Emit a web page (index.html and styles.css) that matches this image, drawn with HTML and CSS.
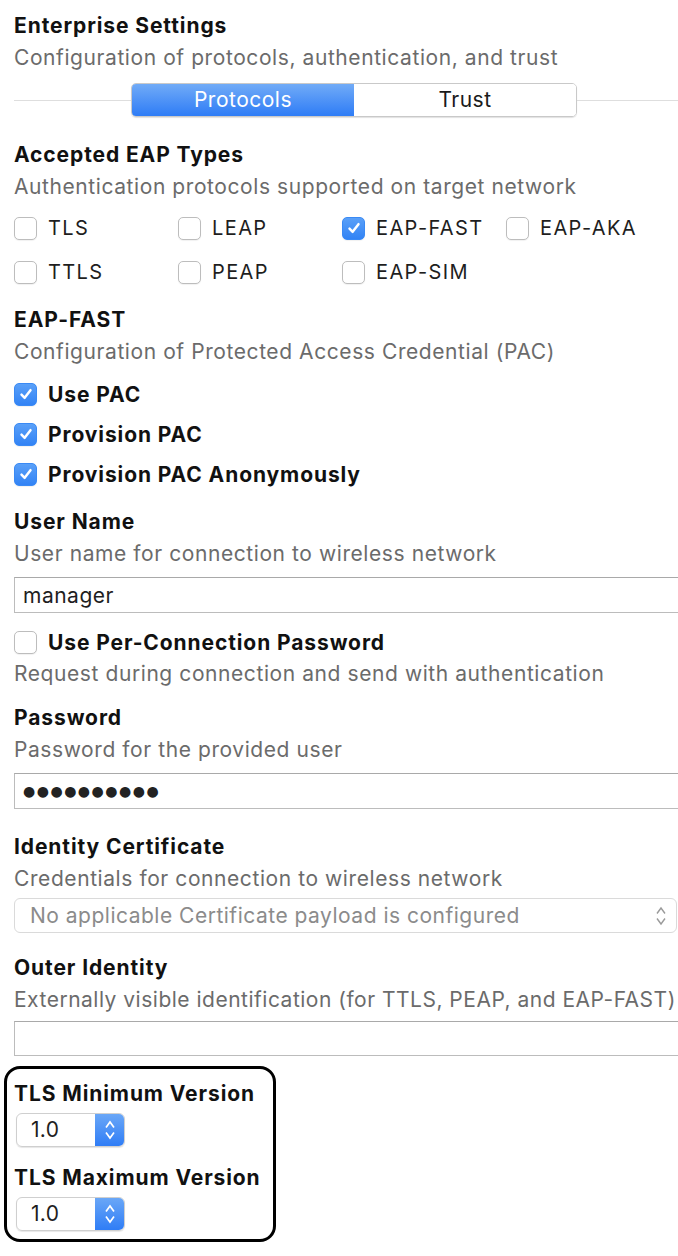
FILE: index.html
```html
<!DOCTYPE html>
<html lang="en">
<head>
  <meta charset="UTF-8" />
  <meta name="viewport" content="width=device-width, initial-scale=1" />
  <title>Enterprise Settings</title>
  <link rel="stylesheet" href="styles.css">
</head>
<body>
  <div class="page">

    <div class="section">
      <div class="title">Enterprise Settings</div>
      <div class="sub">Configuration of protocols, authentication, and trust</div>
      <div class="tabs-row">
        <div class="rule"></div>
        <div class="segmented">
          <span class="seg active">Protocols</span>
          <span class="seg">Trust</span>
        </div>
        <div class="rule"></div>
      </div>
    </div>

    <div class="section eap-types">
      <div class="title">Accepted EAP Types</div>
      <div class="sub">Authentication protocols supported on target network</div>
      <div class="check-grid">
        <label class="check"><span class="box"></span>TLS</label>
        <label class="check"><span class="box"></span>LEAP</label>
        <label class="check"><span class="box checked"><svg viewBox="0 0 16 16"><path d="M4 8.6 L6.8 11.4 L12 4.6" /></svg></span>EAP-FAST</label>
        <label class="check"><span class="box"></span>EAP-AKA</label>
        <label class="check"><span class="box"></span>TTLS</label>
        <label class="check"><span class="box"></span>PEAP</label>
        <label class="check"><span class="box"></span>EAP-SIM</label>
      </div>
    </div>

    <div class="section eap-fast">
      <div class="title">EAP-FAST</div>
      <div class="sub">Configuration of Protected Access Credential (PAC)</div>
      <div class="check-list">
        <label class="check bold"><span class="box checked"><svg viewBox="0 0 16 16"><path d="M4 8.6 L6.8 11.4 L12 4.6" /></svg></span>Use PAC</label>
        <label class="check bold"><span class="box checked"><svg viewBox="0 0 16 16"><path d="M4 8.6 L6.8 11.4 L12 4.6" /></svg></span>Provision PAC</label>
        <label class="check bold"><span class="box checked"><svg viewBox="0 0 16 16"><path d="M4 8.6 L6.8 11.4 L12 4.6" /></svg></span>Provision PAC Anonymously</label>
      </div>
    </div>

    <div class="section user-name">
      <div class="title">User Name</div>
      <div class="sub">User name for connection to wireless network</div>
      <input class="field" type="text" value="manager" />
      <label class="check bold per-conn"><span class="box"></span>Use Per-Connection Password</label>
      <div class="sub">Request during connection and send with authentication</div>
    </div>

    <div class="section password">
      <div class="title">Password</div>
      <div class="sub">Password for the provided user</div>
      <div class="field dots">●●●●●●●●●●</div>
    </div>

    <div class="section identity">
      <div class="title">Identity Certificate</div>
      <div class="sub">Credentials for connection to wireless network</div>
      <div class="select-wide">
        <span>No applicable Certificate payload is configured</span>
        <svg class="updown" viewBox="0 0 12 24"><path d="M2 9.5 L6 4 L10 9.5 M2 14.5 L6 20 L10 14.5" /></svg>
      </div>
    </div>

    <div class="section outer">
      <div class="title">Outer Identity</div>
      <div class="sub tight">Externally visible identification (for TTLS, PEAP, and EAP-FAST)</div>
      <input class="field" type="text" value="" />
    </div>

    <div class="tls-box">
      <div class="title">TLS Minimum Version</div>
      <div class="popup">
        <span class="popup-value">1.0</span>
        <span class="popup-arrows"><svg viewBox="0 0 12 24"><path d="M2 9.5 L6 4 L10 9.5 M2 14.5 L6 20 L10 14.5" /></svg></span>
      </div>
      <div class="title">TLS Maximum Version</div>
      <div class="popup">
        <span class="popup-value">1.0</span>
        <span class="popup-arrows"><svg viewBox="0 0 12 24"><path d="M2 9.5 L6 4 L10 9.5 M2 14.5 L6 20 L10 14.5" /></svg></span>
      </div>
    </div>

  </div>
</body>
</html>
```

FILE: styles.css
```css
* {
  box-sizing: border-box;
}

html, body {
  margin: 0;
  background: white;
  overflow: hidden;
}

body {
  font-family: Inter, Roboto, "Liberation Sans", sans-serif;
  color: #1e1e1e;
  font-size: 21px;
  letter-spacing: 0.3px;
}

.page {
  width: 680px;
  margin-left: 14px;
  padding-top: 10px;
}

.title {
  font-weight: 700;
  font-size: 21px;
  line-height: 32px;
  letter-spacing: 0.9px;
  color: #111;
}

.sub {
  line-height: 32px;
  letter-spacing: 0.58px;
  color: #6b6b6b;
}

.sub.tight {
  letter-spacing: 0.5px;
}

.tabs-row {
  display: flex;
  align-items: center;
  margin-top: 9px;
  height: 34px;
}

.rule {
  flex: 1;
  height: 1px;
  background: #dedede;
}

.segmented {
  display: flex;
  border: 1px solid #c9c9c9;
  border-radius: 5px;
  overflow: hidden;
  box-shadow: 0 1px 1px rgba(0, 0, 0, 0.12);
}

.seg {
  width: 222px;
  height: 32px;
  line-height: 32px;
  text-align: center;
  background: white;
  color: #1a1a1a;
  letter-spacing: 0.5px;
}

.seg.active {
  background: linear-gradient(#71abf7, #2e7cf6);
  color: white;
}

.eap-types {
  margin-top: 22px;
}

.check-grid {
  display: grid;
  grid-template-columns: repeat(4, 164px);
  margin-top: 3px;
}

.check {
  display: flex;
  align-items: center;
  gap: 11px;
  height: 44px;
  font-size: 20px;
  letter-spacing: 1.4px;
  color: #1e1e1e;
}

.check.bold {
  font-weight: 700;
  font-size: 21px;
  letter-spacing: 0.9px;
  height: 40px;
  color: #111;
}

.box {
  width: 23px;
  height: 23px;
  flex: none;
  border: 1px solid #bdbdbd;
  border-radius: 5px;
  background: white;
  box-shadow: 0 1px 1px rgba(0, 0, 0, 0.06);
  display: flex;
  align-items: center;
  justify-content: center;
}

.box.checked {
  border-color: #3a8af5;
  background: linear-gradient(#5aa0f8, #3283f5);
}

.box svg {
  width: 18px;
  height: 18px;
  fill: none;
  stroke: white;
  stroke-width: 2.2;
  stroke-linecap: round;
  stroke-linejoin: round;
}

.eap-fast {
  margin-top: 10px;
}

.check-list {
  margin-top: 6px;
}

.user-name {
  margin-top: 12px;
}

.field {
  display: block;
  width: 100%;
  height: 36px;
  margin-top: 7px;
  border: 1px solid #bcbcbc;
  border-top-color: #a9a9a9;
  padding: 0 8px;
  font-family: Inter, Roboto, "Liberation Sans", sans-serif;
  font-size: 21px;
  letter-spacing: 0.5px;
  color: #1e1e1e;
  background: white;
  outline: none;
}

.check.per-conn {
  height: 32px;
  margin-top: 13px;
}

.password {
  margin-top: 12px;
}

.dots {
  line-height: 34px;
  font-family: "DejaVu Sans", sans-serif;
  font-size: 14px;
  letter-spacing: 1.5px;
  color: #222;
}

.identity {
  margin-top: 22px;
}

.select-wide {
  display: flex;
  align-items: center;
  justify-content: space-between;
  width: 663px;
  height: 35px;
  margin-top: 3px;
  border: 1px solid #dadada;
  border-radius: 6px;
  padding: 0 9px 0 15px;
  letter-spacing: 0.5px;
  color: #8b8b8b;
}

.updown {
  flex: none;
  width: 12px;
  height: 24px;
  fill: none;
  stroke: #9a9a9a;
  stroke-width: 1.4;
}

.outer {
  margin-top: 19px;
}

.outer .field {
  height: 35px;
  margin-top: 5px;
}

.tls-box {
  width: 272px;
  margin: 10px 0 0 -10px;
  padding: 9px 0 8px 7px;
  border: 3px solid #000;
  border-radius: 16px;
}

.tls-box .title {
  line-height: 32px;
}

.popup {
  display: flex;
  width: 109px;
  height: 34px;
  margin: 3px 0 15px 2px;
  border: 1px solid #cfcfcf;
  border-radius: 6px;
  overflow: hidden;
  box-shadow: 0 1px 1px rgba(0, 0, 0, 0.1);
}

.popup:last-child {
  margin-bottom: 0;
}

.popup-value {
  flex: 1;
  padding-left: 14px;
  line-height: 32px;
  font-size: 21px;
  color: #1e1e1e;
}

.popup-arrows {
  width: 29px;
  display: flex;
  align-items: center;
  justify-content: center;
  background: linear-gradient(#6aa7f7, #2f7df6);
}

.popup-arrows svg {
  flex: none;
  width: 12px;
  height: 24px;
  fill: none;
  stroke: white;
  stroke-width: 1.7;
}
```
